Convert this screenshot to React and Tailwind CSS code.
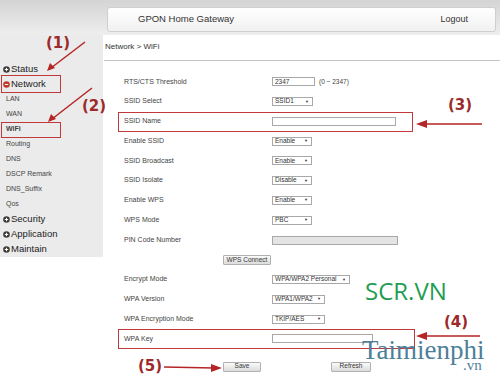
import React from "react";

// left menu of the gateway
const menu = [
  { label: "Status", big: true },
  { label: "Network", big: true, open: true },
  { label: "LAN" },
  { label: "WAN" },
  { label: "WiFi", active: true },
  { label: "Routing" },
  { label: "DNS" },
  { label: "DSCP Remark" },
  { label: "DNS_Suffix" },
  { label: "Qos" },
  { label: "Security", big: true },
  { label: "Application", big: true },
  { label: "Maintain", big: true },
];

const Bullet = ({ open }) => (
  <svg width="7" height="7" viewBox="0 0 7 7" className="shrink-0">
    <circle cx="3.5" cy="3.5" r="3.3" fill={open ? "#c0392b" : "#3c3c3c"} />
    <path d="M1.8 3.5h3.4" stroke="#fff" strokeWidth="1" />
    {!open && <path d="M3.5 1.8v3.4" stroke="#fff" strokeWidth="1" />}
  </svg>
);

const Select = ({ value, w }) => (
  <div
    className="h-[9px] border border-[#a8a8a8] bg-white flex items-center justify-between pl-[2px] pr-[3px] text-[6.5px] leading-none text-[#333]"
    style={{ width: w }}
  >
    <span>{value}</span>
    <span className="text-[4px]">▼</span>
  </div>
);

const Input = ({ w, value, gray }) => (
  <div
    className={`h-[9px] border border-[#a8a8a8] flex items-center pl-[2px] text-[6.5px] leading-none text-[#333] ${gray ? "bg-[#e4e4e4]" : "bg-white"}`}
    style={{ width: w }}
  >
    {value}
  </div>
);

const Btn = ({ children, w }) => (
  <div
    className="h-[10px] border border-[#b0b0b0] rounded-[1px] bg-gradient-to-b from-[#fafafa] to-[#dcdcdc] flex items-center justify-center text-[6.5px] leading-none text-[#333]"
    style={{ width: w }}
  >
    {children}
  </div>
);

const Row = ({ label, children }) => (
  <div className="flex items-center h-[19.77px]">
    <span className="w-[148px] shrink-0 text-[7px] text-[#444]">{label}</span>
    {children}
  </div>
);

const Num = ({ children, className }) => (
  <span
    className={`absolute text-[15px] font-bold leading-none text-[#9c2a2a] ${className}`}
    style={{ fontFamily: '"DejaVu Sans", sans-serif' }}
  >
    {children}
  </span>
);

export default function App() {
  return (
    <div
      className="relative w-[500px] h-[375px] overflow-hidden bg-white"
      style={{ fontFamily: '"Liberation Sans", Arial, sans-serif' }}
    >
      {/* top band */}
      <div className="h-[35px] flex bg-gradient-to-b from-[#d4d4d4] to-[#eeeeee]">
        <div className="w-[107px] shrink-0" />
        <div className="flex-1 mr-[4px] mt-[7px] h-[25px] border border-[#cfcfcf] rounded-[3px] bg-gradient-to-b from-white to-[#f1f1f1] flex items-center justify-between pl-[30px] pr-[27px]">
          <span className="text-[9.5px] text-[#333]">GPON Home Gateway</span>
          <span className="text-[9px] text-[#333]">Logout</span>
        </div>
      </div>

      <div className="flex">
        {/* menu */}
        <nav className="w-[103px] shrink-0 h-[222px] bg-[#ebebeb] pt-[27px]">
          {menu.map((m) =>
            m.big ? (
              <div key={m.label} className="h-[15px] flex items-center gap-[1px] pl-[3px] text-[9.5px] text-[#222]">
                <Bullet open={m.open} />
                <span>{m.label}</span>
              </div>
            ) : (
              <div
                key={m.label}
                className={`h-[15px] flex items-center pl-[6px] text-[7px] text-[#444] ${m.active ? "font-bold text-[#222]" : ""}`}
              >
                {m.label}
              </div>
            )
          )}
        </nav>

        {/* form */}
        <main className="flex-1">
          <div className="pt-[6px] pl-[2px] h-[18px] text-[8px] leading-[12px] text-[#333]">Network &gt; WiFi</div>
          <div className="mt-[7px] h-px bg-[#c4c4c4] ml-[1px]" />
          <div className="mt-[11px] pl-[21px]">
            <Row label="RTS/CTS Threshold">
              <Input w={43} value="2347" />
              <span className="ml-[4px] text-[6.5px] text-[#444]">(0 ~ 2347)</span>
            </Row>
            <Row label="SSID Select">
              <Select value="SSID1" w={41} />
            </Row>
            <Row label="SSID Name">
              <Input w={124} />
            </Row>
            <Row label="Enable SSID">
              <Select value="Enable" w={40} />
            </Row>
            <Row label="SSID Broadcast">
              <Select value="Enable" w={40} />
            </Row>
            <Row label="SSID Isolate">
              <Select value="Disable" w={40} />
            </Row>
            <Row label="Enable WPS">
              <Select value="Enable" w={40} />
            </Row>
            <Row label="WPS Mode">
              <Select value="PBC" w={40} />
            </Row>
            <Row label="PIN Code Number">
              <Input w={126} gray />
            </Row>
            <div className="flex items-center h-[19.77px] pl-[99px]">
              <Btn w={48}>WPS Connect</Btn>
            </div>
            <Row label="Encrypt Mode">
              <Select value="WPA/WPA2 Personal" w={78} />
            </Row>
            <Row label="WPA Version">
              <Select value="WPA1/WPA2" w={53} />
            </Row>
            <Row label="WPA Encryption Mode">
              <Select value="TKIP/AES" w={53} />
            </Row>
            <Row label="WPA Key">
              <Input w={101} />
            </Row>
            <div className="flex items-center mt-[13px] pl-[99px] gap-[70px]">
              <Btn w={38}>Save</Btn>
              <Btn w={40}>Refresh</Btn>
            </div>
          </div>
        </main>
      </div>

      {/* annotations */}
      <div className="absolute left-[1px] top-[75px] w-[60px] h-[18px] border-[1.5px] border-[#c0393b]" />
      <div className="absolute left-[1px] top-[122px] w-[60px] h-[16px] border-[1.5px] border-[#c0393b]" />
      <div className="absolute left-[118px] top-[112px] w-[295px] h-[20px] border-[1.5px] border-[#c0393b]" />
      <div className="absolute left-[118px] top-[329px] w-[297px] h-[20px] border-[1.5px] border-[#c0393b]" />

      <Num className="left-[46px] top-[36px]">(1)</Num>
      <Num className="left-[82px] top-[99px]">(2)</Num>
      <Num className="left-[448px] top-[98px]">(3)</Num>
      <Num className="left-[444px] top-[315px]">(4)</Num>
      <Num className="left-[138px] top-[359px]">(5)</Num>

      <svg className="absolute inset-0 pointer-events-none" width="500" height="375" viewBox="0 0 500 375">
        <g stroke="#b52525" strokeWidth="1.5" fill="none">
          <path d="M85 42 L51 68" />
          <path d="M92 88 L52 119" />
          <path d="M482 124 L424 124" />
          <path d="M480 336 L424 336" />
          <path d="M164 367 L214 368" />
        </g>
        <g fill="#b52525">
          <path d="M47 71 L50 63 L55 68 Z" />
          <path d="M48 122 L51 114 L56 119 Z" />
          <path d="M416 124 L427 120 L427 128 Z" />
          <path d="M416 336 L427 332 L427 340 Z" />
          <path d="M222 368 L211 364 L211 372 Z" />
        </g>
      </svg>

      {/* watermarks */}
      <span
        className="absolute left-[365px] top-[279px] text-[24px] leading-none text-[#1f9d52]"
        style={{ fontFamily: '"Open Sans", sans-serif' }}
      >
        SCR.VN
      </span>
      <span
        className="absolute left-[362px] top-[340px] text-[27px] leading-[20px] text-[#4d7f9a]"
        style={{ fontFamily: '"Liberation Serif", serif' }}
      >
        Taimienphi
      </span>
      <span
        className="absolute left-[463px] top-[360px] text-[15px] leading-[10px] text-[#4d7f9a]"
        style={{ fontFamily: '"Liberation Serif", serif' }}
      >
        .vn
      </span>
    </div>
  );
}
